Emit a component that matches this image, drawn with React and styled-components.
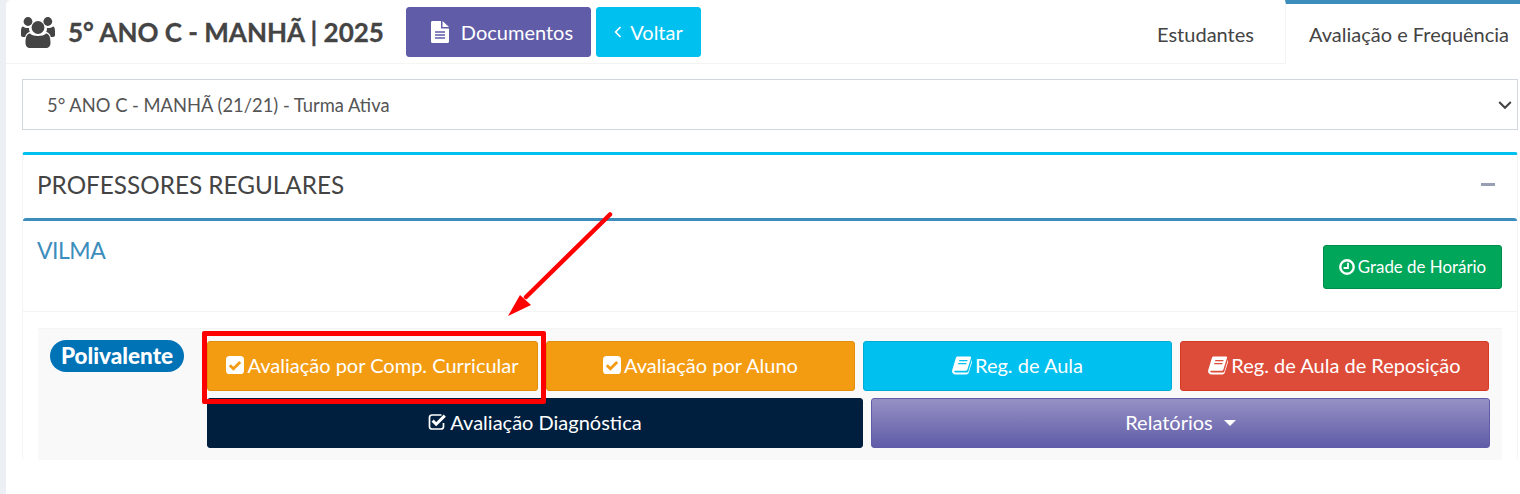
import React from "react";
import styled, { createGlobalStyle } from "styled-components";

const Global = createGlobalStyle`
  html, body { margin: 0; padding: 0; background: #ecf0f5; }
  body { font-family: "Lato", "Noto Sans", sans-serif; color: #444; width: 1520px; height: 494px; overflow: hidden; }
  * { box-sizing: border-box; }
`;

const Page = styled.div`
  position: relative;
  width: 1520px;
  height: 494px;
  padding-left: 6px;
  overflow: hidden;
`;
const Content = styled.main`
  width: 1514px;
  height: 494px;
  background: #fff;
  border-top-left-radius: 5px;
`;
const Header = styled.header`
  display: flex;
  align-items: flex-start;
  height: 64px;
  border-bottom: 1px solid #f4f4f4;
  padding-left: 15px;
`;
const Title = styled.h1`
  display: flex;
  align-items: center;
  gap: 13px;
  margin: 0;
  height: 64px;
  width: 385px;
  font-size: 26px;
  font-weight: 700;
  color: #444;
  white-space: nowrap;
  -webkit-text-stroke: 0.3px #444;
`;
const HeaderButton = styled.button`
  display: inline-flex;
  align-items: center;
  justify-content: center;
  gap: ${p => p.$gap}px;
  width: ${p => p.$w}px;
  height: 50px;
  margin-top: 7px;
  margin-right: 5px;
  background: ${p => p.$bg};
  border: 1px solid ${p => p.$bg};
  border-radius: 3px;
  color: #fff;
  font: inherit;
  font-size: 20px;
  padding: 0 0 0 ${p => p.$shift || 0}px;
`;
const Tabs = styled.nav`
  display: flex;
  align-items: flex-start;
  margin-left: auto;
  height: 65px;
`;
const Tab = styled.div`
  display: flex;
  align-items: center;
  justify-content: center;
  height: ${p => (p.$active ? 65 : 63)}px;
  width: ${p => p.$w}px;
  font-size: 20px;
  color: #444;
  background: #fff;
  border-top: ${p => (p.$active ? "4px solid #3c8dbc" : "none")};
  border-left: ${p => (p.$active ? "1px solid #f4f4f4" : "none")};
  padding: ${p => (p.$active ? "0 0 2px 12px" : "4px 0 0 0")};
  z-index: 1;
  white-space: nowrap;
`;
const Body = styled.div`
  padding: 15px 2px 0 16px;
`;
const Select = styled.div`
  display: flex;
  align-items: center;
  justify-content: space-between;
  height: 51px;
  border: 1px solid #d2d6de;
  padding: 0 5px 0 24px;
  font-size: 18.35px;
  color: #555;
`;
const Box = styled.section`
  margin-top: 22px;
  border-top: 3.5px solid #00c0ef;
  border-radius: 3px;
  border-left: 1px solid #f4f4f4;
  border-right: 1px solid #f4f4f4;
`;
const BoxHeader = styled.div`
  display: flex;
  align-items: center;
  justify-content: space-between;
  height: 62.5px;
  padding: 0 22px 4px 14px;
  font-size: 24.3px;
  color: #444;
`;
const Minus = styled.span`
  width: 14px;
  height: 3px;
  background: #97a0b3;
`;
const InnerBox = styled.div`
  border-top: 3.5px solid #3c8dbc;
  border-radius: 3px;
`;
const TeacherRow = styled.div`
  display: flex;
  justify-content: space-between;
  height: 91px;
  padding: 15px 15px 0 14px;
  border-bottom: 1px solid #f4f4f4;
`;
const Teacher = styled.h3`
  margin: 0;
  font-size: 23px;
  font-weight: 400;
  letter-spacing: -0.5px;
  color: #3c8dbc;
  line-height: 28px;
`;
const SmallButton = styled.button`
  display: inline-flex;
  align-items: center;
  justify-content: center;
  gap: 3px;
  width: 179px;
  height: 44px;
  margin-top: 9px;
  background: #00a65a;
  border: 1px solid #008d4c;
  border-radius: 3px;
  color: #fff;
  font: inherit;
  font-size: 16.9px;
  padding: 0;
`;
const Well = styled.div`
  display: flex;
  align-items: flex-start;
  height: 132px;
  margin: 16px 15px 0 15px;
  padding-top: 11px;
  padding-left: 12px;
  background: #f9f9f9;
  border-top: 1px solid #f4f4f4;
`;
const Pill = styled.span`
  display: flex;
  align-items: center;
  justify-content: center;
  width: 134px;
  height: 32px;
  background: #0073b7;
  border-radius: 16px;
  color: #fff;
  font-size: 22.5px;
  font-weight: 900;
`;
const Actions = styled.div`
  display: grid;
  grid-template-columns: repeat(2, auto);
  row-gap: 7px;
  margin: 1px 0 0 23px;
`;
const Row = styled.div`
  grid-column: 1 / -1;
  display: grid;
  grid-template-columns: ${p => p.$cols};
  column-gap: 8px;
`;
const Action = styled.button`
  display: flex;
  align-items: center;
  justify-content: center;
  gap: 3px;
  height: 50px;
  background: ${p => p.$bg};
  border: 1px solid ${p => p.$border || p.$bg};
  border-radius: 3px;
  color: #fff;
  font: inherit;
  font-size: 20px;
  padding: 0 0 2px;
  white-space: nowrap;
`;
const GradientAction = styled(Action)`
  background: linear-gradient(to bottom, #9691c4, #605ca8);
  border-color: #605ca8;
  gap: 11px;
`;
const Caret = styled.span`
  width: 0;
  height: 0;
  border-left: 6px solid transparent;
  border-right: 6px solid transparent;
  border-top: 6px solid #fff;
  margin-top: 3px;
`;
const Highlight = styled.div`
  position: absolute;
  left: 202px;
  top: 331px;
  width: 344px;
  height: 73px;
  border: 5px solid #ff0000;
  border-radius: 2px;
  pointer-events: none;
`;
const ArrowLayer = styled.svg`
  position: absolute;
  left: 500px;
  top: 205px;
  width: 120px;
  height: 115px;
  pointer-events: none;
`;

const UsersIcon = () => (
  <svg width="34" height="34" viewBox="21 13 34 34" fill="#444">
    <circle cx="28" cy="19.5" r="4.4" />
    <circle cx="47.8" cy="19.5" r="4.4" />
    <circle cx="38" cy="25.5" r="6.4" />
    <path d="M25.5 41c0-6 1.5-9.5 4.5-9.5 2 1.8 4.8 2.5 8 2.5s6-.7 8-2.5c3 0 4.5 3.5 4.5 9.5 0 3-2 5-4.5 5h-16c-2.5 0-4.5-2-4.5-5Z" />
    <path d="M21 33v-4c0-2.5.8-4.5 2-4.5 1.3 1 3 1.5 4.7 1.5.6 0 1 0 1.5-.1-.3 1-.2 2.5.6 3.8-2.8 1-4.4 3.2-4.6 5.3H23c-1.2 0-2-.8-2-2Z" />
    <path d="M55 33v-4c0-2.5-.8-4.5-2-4.5-1.3 1-3 1.5-4.7 1.5-.6 0-1 0-1.5-.1.3 1 .2 2.5-.6 3.8 2.8 1 4.4 3.2 4.6 5.3H53c1.2 0 2-.8 2-2Z" />
  </svg>
);

const FileIcon = ({ accent }) => (
  <svg width="18" height="22" viewBox="0 0 18 22">
    <path fill="#fff" d="M1.5 0H10v7.5h8V20.5c0 .9-.6 1.5-1.5 1.5h-15C.6 22 0 21.4 0 20.5v-19C0 .6.6 0 1.5 0Z" />
    <path fill="#fff" d="M11.5 0 18 6h-6.5Z" />
    <path stroke={accent} strokeWidth="1.4" d="M4 11h10M4 14h10M4 17h10" />
  </svg>
);

const LeftChevron = () => (
  <svg width="8" height="12" viewBox="0 0 8 12">
    <path d="M6.5 1 L1.6 6 L6.5 11" fill="none" stroke="#fff" strokeWidth="1.7" />
  </svg>
);

const CheckSolid = ({ accent }) => (
  <svg width="18" height="18" viewBox="0 0 18 18">
    <rect width="18" height="18" rx="3.6" fill="#fff" />
    <path d="M3.8 9.2 L7.4 12.8 L14.2 6" fill="none" stroke={accent} strokeWidth="2.8" />
  </svg>
);

const CheckOutline = () => (
  <svg width="19" height="18" viewBox="0 0 19 18">
    <path d="M13.5 2H4C2.6 2 1.5 3 1.5 4.5v9C1.5 15 2.6 16 4 16h9c1.4 0 2.5-1 2.5-2.5V10" fill="none" stroke="#fff" strokeWidth="1.7" />
    <path d="M4.6 7.6 L8.2 11.2 L16.8 2.6" fill="none" stroke="#fff" strokeWidth="3" />
  </svg>
);

const BookIcon = ({ accent }) => (
  <svg width="20" height="20" viewBox="0 0 20 20">
    <path
      fill="#fff"
      d="M5.6 1.5H18c.9 0 1.3.7 1 1.5l-3.6 11.4c-.3.9-1 1.4-2 1.4H3.2c-.9 0-1.1.6-.9 1 .2.4.7.6 1.3.6h11.6c.5 0 .9-.2 1.1-.8L19.8 5c.5.3.6.9.4 1.5l-3.6 11.6c-.3.9-1.1 1.4-2 1.4H3.3C1.5 19.5 0 18 .1 16c0-.6.1-1 .3-1.6L3.8 3.2C4.1 2.2 4.7 1.5 5.6 1.5Z"
    />
    <path fill={accent} d="M7.4 5h8.2l-.4 1.2H7zM6.4 8h8.2l-.4 1.2H6z" />
  </svg>
);

const ClockIcon = () => (
  <svg width="16" height="16" viewBox="0 0 16 16">
    <circle cx="8" cy="8" r="6.7" fill="none" stroke="#fff" strokeWidth="2.4" />
    <path d="M9 3.8V9H4.6" fill="none" stroke="#fff" strokeWidth="1.8" />
  </svg>
);

const Chevron = () => (
  <svg width="14" height="10" viewBox="0 0 14 10">
    <path d="M1.2 2 L7 7.8 L12.8 2" fill="none" stroke="#444" strokeWidth="2" />
  </svg>
);

export default function App() {
  return (
    <Page>
      <Global />
      <Content>
        <Header>
          <Title>
            <UsersIcon />
            5° ANO C - MANHÃ | 2025
          </Title>
          <HeaderButton $w={185} $bg="#605ca8" $gap={12} $shift={7}>
            <FileIcon accent="#605ca8" />
            Documentos
          </HeaderButton>
          <HeaderButton $w={105} $bg="#00c0ef" $gap={8}>
            <LeftChevron />
            Voltar
          </HeaderButton>
          <Tabs>
            <Tab $w={159}>Estudantes</Tab>
            <Tab $w={235} $active>Avaliação e Frequência</Tab>
          </Tabs>
        </Header>
        <Body>
          <Select>
            5° ANO C - MANHÃ (21/21) - Turma Ativa
            <Chevron />
          </Select>
          <Box>
            <BoxHeader>
              PROFESSORES REGULARES
              <Minus />
            </BoxHeader>
            <InnerBox>
              <TeacherRow>
                <Teacher>VILMA</Teacher>
                <SmallButton>
                  <ClockIcon />
                  Grade de Horário
                </SmallButton>
              </TeacherRow>
              <Well>
                <Pill>Polivalente</Pill>
                <Actions>
                  <Row $cols="331px 309px 309px 309px">
                    <Action $bg="#f39c12" $border="#e08e0b">
                      <CheckSolid accent="#f39c12" />
                      Avaliação por Comp. Curricular
                    </Action>
                    <Action $bg="#f39c12" $border="#e08e0b">
                      <CheckSolid accent="#f39c12" />
                      Avaliação por Aluno
                    </Action>
                    <Action $bg="#00c0ef" $border="#00acd6">
                      <BookIcon accent="#00c0ef" />
                      Reg. de Aula
                    </Action>
                    <Action $bg="#dd4b39" $border="#d73925">
                      <BookIcon accent="#dd4b39" />
                      Reg. de Aula de Reposição
                    </Action>
                  </Row>
                  <Row $cols="656px 619px">
                    <Action $bg="#001f3f">
                      <CheckOutline />
                      Avaliação Diagnóstica
                    </Action>
                    <GradientAction>
                      Relatórios
                      <Caret />
                    </GradientAction>
                  </Row>
                </Actions>
              </Well>
            </InnerBox>
          </Box>
        </Body>
      </Content>
      <Highlight />
      <ArrowLayer viewBox="0 0 120 115">
        <path d="M110 9.5 L26 92" stroke="#ff0000" strokeWidth="4.5" strokeLinecap="round" fill="none" />
        <polygon points="8,111 20,90 31,100" fill="#ff0000" />
      </ArrowLayer>
    </Page>
  );
}
